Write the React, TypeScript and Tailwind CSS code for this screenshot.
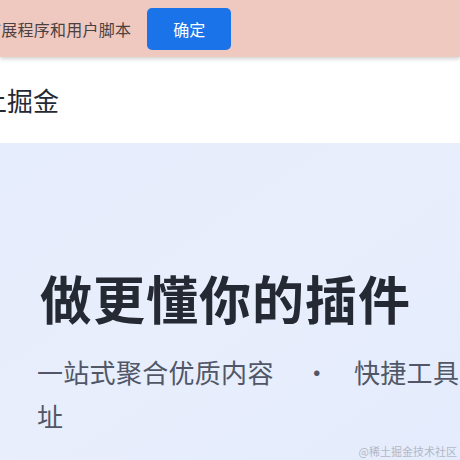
import React from 'react';

const cjk = '"Noto Sans CJK SC", "Noto Sans", sans-serif';

const App: React.FC = () => {
  return (
    <div
      className="relative w-[460px] h-[460px] overflow-hidden bg-white flex flex-col"
      style={{ fontFamily: cjk }}
    >
      {/* Extension notice bar */}
      <div className="relative z-10 h-[57px] shrink-0 bg-[#efc8c0] shadow-[0_2px_4px_rgba(0,0,0,0.18)] flex items-center">
        <span className="ml-[-15px] text-[16px] tracking-[0.25px] leading-none text-[#4a4242] whitespace-nowrap">
          扩展程序和用户脚本
        </span>
        <button className="ml-[16px] w-[84px] h-[42px] rounded-[5px] bg-[#1a73e8] text-white text-[16px] leading-none">
          确定
        </button>
      </div>

      {/* Site header */}
      <div className="h-[86px] shrink-0 bg-white flex items-center">
        <span className="ml-[-45px] text-[26px] leading-none text-[#252933] whitespace-nowrap">
          稀土掘金
        </span>
      </div>

      {/* Hero */}
      <div className="relative flex-1 bg-gradient-to-br from-[#e6edfc] via-[#e8eefc] to-[#e4ecfd] pl-[40px] pt-[125px]">
        <h1 className="text-[52px] tracking-[1px] leading-[60px] font-bold text-[#252933] whitespace-nowrap">
          做更懂你的插件
        </h1>
        <div className="mt-[22px] ml-[-3px] text-[26px] tracking-[0.3px] leading-[44px] text-[#515767]">
          <div className="whitespace-nowrap">
            一站式聚合优质内容
            <span className="ml-[30px] mr-[24px]">·</span>
            快捷工具一键直达
          </div>
          <div>址</div>
        </div>
        <span className="absolute right-[3px] bottom-[3px] text-[11px] leading-none text-[#b3b8c4]">
          @稀土掘金技术社区
        </span>
      </div>
    </div>
  );
};

export default App;
